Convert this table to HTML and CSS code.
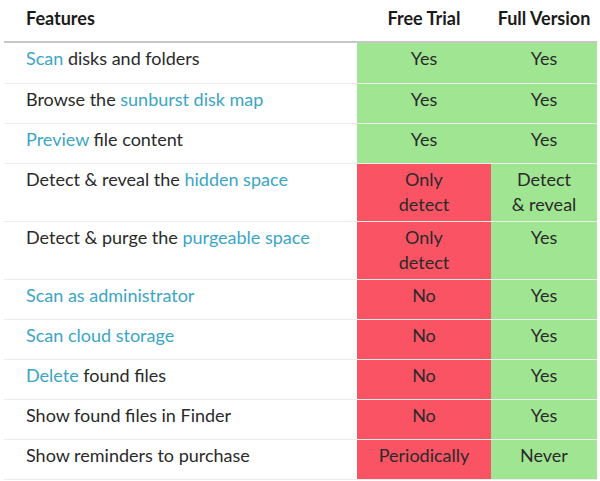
FILE: index.html
```html
<!DOCTYPE html>
<html>
<head>
<meta charset="utf-8">
<link rel="stylesheet" href="styles.css">
</head>
<body>
<div class="table">
  <div class="row head">
    <div class="feat">Features</div>
    <div class="val">Free Trial</div>
    <div class="val">Full Version</div>
  </div>
  <div class="row">
    <div class="feat"><span class="link">Scan</span> disks and folders</div>
    <div class="val yes">Yes</div>
    <div class="val yes">Yes</div>
  </div>
  <div class="row">
    <div class="feat">Browse the <span class="link">sunburst disk map</span></div>
    <div class="val yes">Yes</div>
    <div class="val yes">Yes</div>
  </div>
  <div class="row">
    <div class="feat"><span class="link">Preview</span> file content</div>
    <div class="val yes">Yes</div>
    <div class="val yes">Yes</div>
  </div>
  <div class="row tall">
    <div class="feat">Detect &amp; reveal the <span class="link">hidden space</span></div>
    <div class="val no">Only<br>detect</div>
    <div class="val yes">Detect<br>&amp; reveal</div>
  </div>
  <div class="row tall">
    <div class="feat">Detect &amp; purge the <span class="link">purgeable space</span></div>
    <div class="val no">Only<br>detect</div>
    <div class="val yes">Yes</div>
  </div>
  <div class="row">
    <div class="feat"><span class="link">Scan as administrator</span></div>
    <div class="val no">No</div>
    <div class="val yes">Yes</div>
  </div>
  <div class="row">
    <div class="feat"><span class="link">Scan cloud storage</span></div>
    <div class="val no">No</div>
    <div class="val yes">Yes</div>
  </div>
  <div class="row">
    <div class="feat"><span class="link">Delete</span> found files</div>
    <div class="val no">No</div>
    <div class="val yes">Yes</div>
  </div>
  <div class="row">
    <div class="feat">Show found files in Finder</div>
    <div class="val no">No</div>
    <div class="val yes">Yes</div>
  </div>
  <div class="row last">
    <div class="feat">Show reminders to purchase</div>
    <div class="val no">Periodically</div>
    <div class="val yes">Never</div>
  </div>
</div>
</body>
</html>
```
FILE: styles.css
```css
html, body {
  margin: 0;
  padding: 0;
  background: #ffffff;
}
body {
  font-family: Lato, "Open Sans", sans-serif;
  font-size: 18px;
  color: #2a2a2a;
}
.table {
  margin-left: 4px;
  width: 593px;
}
.row {
  display: grid;
  grid-template-columns: 353px 134px 106px;
  height: 40px;
  border-top: 1px solid #ececec;
  box-sizing: border-box;
  line-height: 25px;
}
.row.tall {
  height: 58px;
}
.row.last {
  height: 41px;
  border-bottom: 1px solid #ececec;
}
.row.head {
  height: 43px;
  border-top: none;
  border-bottom: 2px solid #c6c6c6;
  font-weight: bold;
  color: #1a1a1a;
}
.row.head + .row {
  border-top: none;
}
.feat {
  padding: 3px 0 0 22px;
}
.head .feat, .head .val {
  padding-top: 6px;
}
.val {
  text-align: center;
  padding-top: 3px;
}
.yes {
  background: #a0e592;
}
.no {
  background: #fa5464;
}
.link {
  color: #3ba5c6;
}
```
